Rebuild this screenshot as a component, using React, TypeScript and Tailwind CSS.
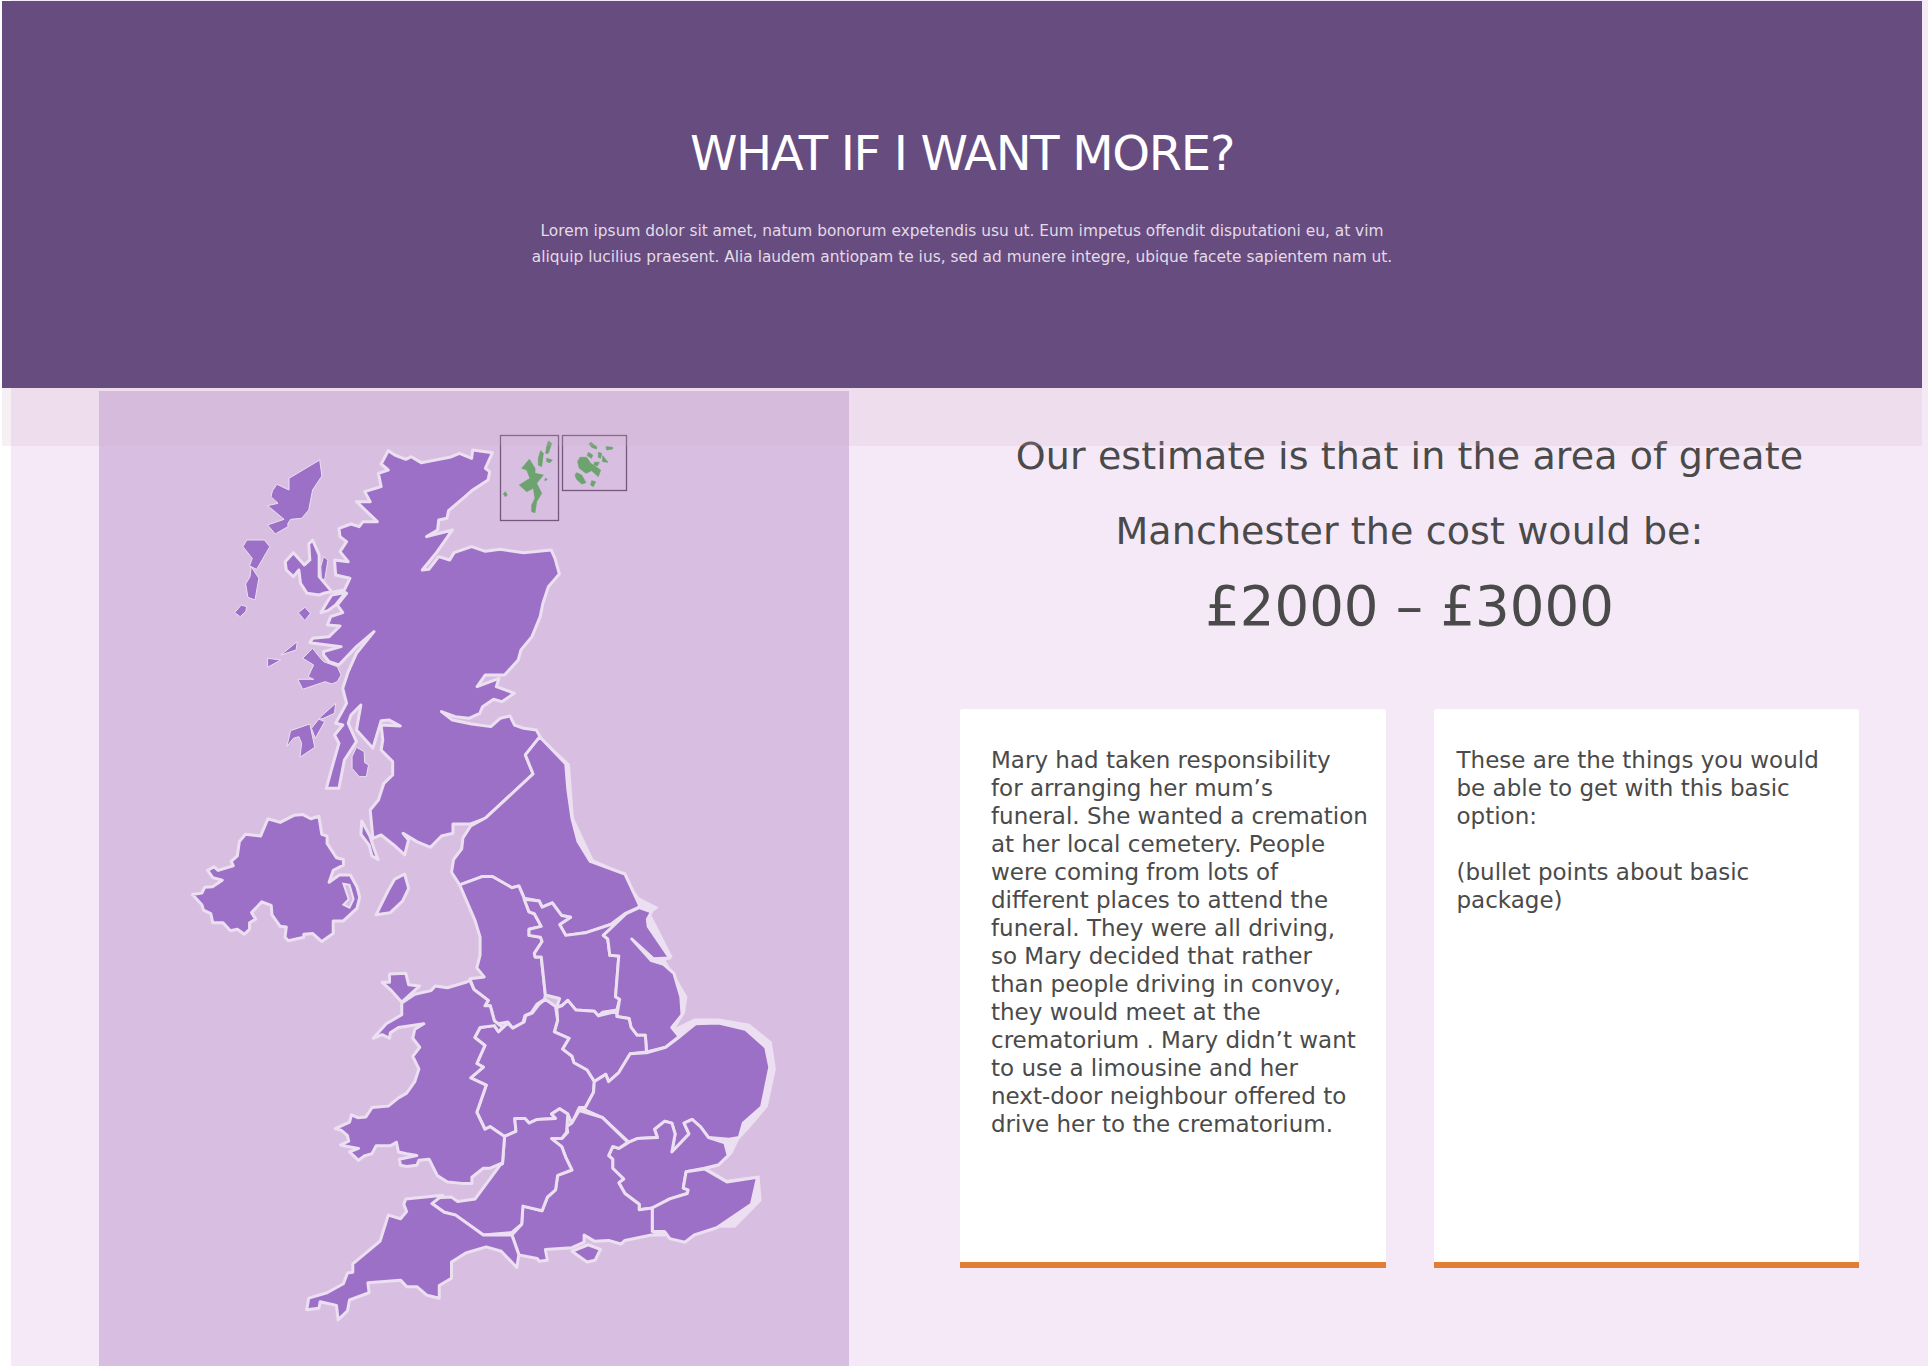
const Z1 = "translate(0 360) scale(0.5484 0.3333)";
const Z2 = "translate(170 800) scale(0.408 0.361)";
const Z3 = "translate(480 420) scale(0.3333 0.3333)";

// traced in the coordinates of each crop, see the three transforms above
const northLand = [
  "708,272 720,285 740,298 750,290 768,308 820,292 838,280 860,295 862,270 898,278 885,325 893,335 890,360 862,390 848,410 818,452 815,475 800,480 798,510 778,530 825,510 795,580 770,630 782,628 800,590 820,600 828,578 860,560 885,574 912,568 955,578 1005,570 1012,595 1020,642 1000,680 990,730 985,770 970,830 950,870 945,900 920,945 885,945 870,980 910,955 905,980 938,1000 915,1025 900,1018 880,1040 875,1060 855,1075 830,1070 805,1055 825,1080 860,1092 895,1100 912,1075 930,1068 938,1095 955,1105 978,1110 985,1130 958,1185 972,1242 885,1375 858,1392 826,1392 826,1420 805,1428 785,1462 760,1445 735,1420 745,1440 738,1485 718,1455 695,1425 680,1435 675,1350 690,1320 700,1270 716,1245 716,1205 695,1170 698,1140 695,1095 730,1098 710,1080 695,1082 680,1165 650,1110 658,1035 640,1065 635,1090 650,1145 628,1200 618,1285 595,1285 605,1225 618,1150 610,1125 625,1095 612,1090 632,1030 625,985 635,935 650,880 682,815 650,860 618,915 600,905 590,885 590,875 622,860 565,848 570,835 600,830 620,798 597,795 603,770 625,758 615,735 632,700 610,695 628,690 638,655 612,645 610,600 635,605 620,575 632,545 620,530 618,505 640,492 655,500 662,485 688,485 650,425 675,425 665,395 695,380 690,340 708,330 695,312",
  "535,578 555,615 565,600 563,552 570,540 582,585 582,650 605,695 590,700 582,705 560,700 548,670 545,630 535,650 522,630 520,605",
  "605,705 630,698 612,735 598,752 585,758 597,725",
];

const northIslands = [
  "583,300 587,348 570,390 563,450 550,475 530,478 525,490 525,500 502,522 488,495 518,478 488,437 507,430 494,410 497,392 505,373 527,390 527,355",
  "450,540 482,540 492,560 468,628 455,618 460,595 443,560",
  "458,620 472,655 465,720 452,712 448,672 456,650",
  "440,735 450,740 448,755 438,770 428,758",
  "556,742 566,760 556,782 544,758",
  "542,845 540,870 512,885",
  "488,895 512,900 488,922",
  "570,865 582,890 590,905 615,920 622,945 615,965 605,972 593,965 552,988 543,958 572,958 562,950 572,915 552,895",
  "612,1030 610,1060 590,1075 582,1078 592,1085 575,1135 568,1105 585,1070",
  "565,1092 574,1162 547,1192 550,1150 545,1130 535,1135 523,1160 530,1112",
  "650,1162 664,1175 665,1208 672,1215 668,1250 655,1250 642,1225 642,1190",
  "590,590 598,600 592,660 586,655 585,620",
];

const coastShadow =
  "906,-178 980,-100 990,50 1015,110 1038,165 1100,195 1150,270 1198,298 1178,315 1232,435 1215,445 1250,510 1268,545 1262,590 1240,630 1285,605 1345,605 1420,620 1475,670 1485,745 1465,850 1420,910 1395,940 1378,980 1345,1015 1320,1022 1365,1052 1445,1040 1450,1110 1385,1185 1340,1185 1000,1000";

const southRegions = [
  "906,-175 871,-125 890,-72 773,50 737,72 718,105 715,135 695,165 690,200 710,235 765,212 790,212 838,243 855,238 868,272 905,280 912,297 937,285 960,320 982,325 955,345 970,375 1018,368 1080,345 1115,315 1150,297 1150,290 1115,205 1030,170 1000,115 985,50 975,-30 970,-100",
  "710,235 765,212 790,212 838,243 855,238 868,272 880,310 893,315 910,350 880,358 880,375 908,380 912,392 893,425 895,435 910,435 920,540 918,552 900,565 885,590 870,597 865,617 840,632 828,615 805,620 795,612 785,570 772,570 780,555 745,525 735,495 770,490 752,465 760,430 760,380 748,335",
  "868,275 905,280 912,297 937,285 960,320 982,325 955,345 970,375 1018,368 1080,345 1100,338 1062,375 1073,385 1078,430 1100,432 1092,545 1102,552 1095,582 1060,588 1050,598 1040,585 995,582 975,555 960,570 948,572 955,550 920,540 910,435 895,435 893,425 912,392 908,380 880,375 880,358 910,350 893,315 880,310",
  "1150,298 1118,315 1062,375 1073,385 1078,430 1100,432 1092,545 1102,552 1095,600 1125,605 1130,630 1145,652 1165,652 1168,698 1215,685 1248,655 1230,630 1255,595 1252,545 1235,480 1210,455 1180,445 1132,385 1185,440 1225,438 1172,350 1170,330 1180,310",
  "1095,585 1095,600 1125,605 1130,630 1145,652 1165,652 1168,698 1128,703 1100,755 1075,780 1068,760 1040,780 1022,748 990,728 985,710 962,690 978,660 942,642 950,610 948,575 960,570 975,555 995,582 1040,585 1050,598",
  "920,552 945,572 950,610 942,642 978,660 962,690 985,710 990,728 1022,748 1040,780 1038,810 1018,852 1003,852 985,895 975,870 955,855 935,870 945,882 900,885 880,895 870,882 845,882 848,918 820,932 785,905 772,912 752,865 775,790 737,770 768,740 752,730 772,680 747,658 760,630 795,625 805,642 815,632 828,618 840,632 868,615 872,597 888,590 905,565",
  "1168,700 1215,685 1250,655 1288,620 1345,618 1410,635 1460,685 1470,740 1450,850 1405,895 1395,935 1370,940 1320,935 1300,905 1285,905 1280,885 1260,895 1272,925 1230,975 1238,925 1230,895 1212,890 1188,912 1195,935 1145,938 1125,948 1060,880 1010,855 1018,852 1038,810 1040,780 1068,760 1075,780 1100,755 1128,703",
  "1125,948 1145,938 1195,935 1188,912 1212,890 1230,895 1238,925 1230,975 1272,925 1260,895 1280,885 1300,905 1320,935 1360,950 1368,985 1345,1010 1310,1020 1265,1030 1258,1075 1270,1080 1268,1090 1225,1105 1185,1130 1150,1135 1150,1120 1115,1090 1100,1060 1112,1050 1085,1020 1085,995 1075,985 1085,960 1100,965",
  "1310,1022 1365,1058 1440,1045 1425,1120 1340,1185 1285,1205 1262,1225 1225,1215 1212,1195 1182,1195 1182,1130 1225,1105 1268,1090 1270,1080 1258,1075 1265,1030",
  "1003,860 1060,880 1122,948 1100,965 1085,960 1075,985 1085,995 1085,1020 1112,1050 1100,1060 1115,1090 1150,1120 1150,1135 1182,1130 1182,1195 1212,1205 1180,1205 1115,1220 1105,1230 1075,1220 1040,1222 1015,1205 1015,1225 985,1240 920,1245 925,1275 905,1278 900,1270 855,1260 838,1205 862,1175 865,1125 912,1138 925,1100 945,1080 950,1040 985,1025 970,990 960,960 935,938 960,938 975,920 972,905 985,895",
  "820,932 848,918 845,882 870,882 880,895 900,885 945,882 935,870 955,855 975,870 972,920 960,938 935,938 960,960 970,990 985,1025 950,1040 945,1080 925,1100 912,1138 865,1125 862,1175 838,1198 768,1205 700,1150 672,1142 642,1118 655,1102 690,1100 705,1112 748,1105 810,1010 815,1008",
  "735,500 745,525 780,555 772,570 785,570 795,612 815,630 805,642 795,625 760,630 747,658 772,680 752,730 768,740 737,770 775,790 752,865 772,912 785,905 820,932 815,1005 785,1020 768,1020 740,1045 740,1062 715,1062 680,1058 655,1040 635,995 610,998 605,1012 580,1015 565,1012 562,995 605,985 580,980 560,975 555,948 540,958 505,958 495,980 478,985 462,998 440,975 462,965 425,958 418,955 438,945 435,930 420,915 405,910 440,892 445,872 460,880 480,878 495,852 535,848 560,825 580,812 600,780 610,745 595,710 612,685 595,660 600,635 622,620 560,630 540,645 538,660 520,650 498,660 530,620 568,595 568,562 600,538 640,528 650,515 680,520 725,505",
  "520,505 538,505 538,482 578,480 585,512 612,515 568,560 540,525",
  "578,1105 668,1095 642,1118 672,1142 700,1150 768,1205 838,1205 855,1260 850,1295 812,1250 775,1238 725,1255 690,1280 690,1325 660,1345 660,1380 630,1372 605,1348 580,1348 565,1330 485,1337 488,1365 440,1385 435,1415 412,1440 408,1400 368,1390 365,1408 335,1412 340,1380 385,1365 425,1340 435,1310 448,1308 448,1285 515,1222 535,1150 565,1160 580,1140 573,1120",
  "985,1250 1025,1232 1055,1245 1042,1275 1022,1280",
  "575,205 585,245 570,280 540,312 505,318 535,250 550,220",
  "470,58 490,100 500,135 510,165 495,155 488,125 468,95",
  "240,52 270,62 305,42 325,40 345,52 365,45 372,95 385,100 385,120 408,160 425,165 425,180 400,195 390,228 415,208 442,208 458,240 465,270 458,300 425,335 400,335 400,370 372,392 350,370 328,372 328,380 290,390 282,380 285,352 270,350 250,318 248,292 225,282 200,312 210,330 195,340 195,358 182,372 165,358 148,362 130,340 105,340 100,315 82,305 78,290 55,262 78,258 85,242 105,240 128,222 105,215 92,195 108,185 118,195 155,182 150,170 165,155 170,115 185,95 222,100",
];

const northernIsles = [
  "148,118 165,145 165,160 190,165 170,190 185,220 170,245 165,278 155,275 155,255 165,235 160,205 140,215 118,195 150,175 140,150 125,145",
  "182,92 190,100 185,140 175,135 175,115",
  "205,63 215,70 205,100 197,100 200,80",
  "200,115 217,120 210,128 200,125",
  "195,175 202,178 195,183",
  "76,215 82,225 76,230 70,222",
  "300,112 320,112 332,130 362,150 355,170 335,152 318,160 298,145 293,125",
  "290,158 305,165 318,188 305,192 290,178 285,165",
  "335,182 347,185 340,200 332,195",
  "333,67 350,80 350,87 335,82 327,72",
  "368,107 384,127 368,125",
  "343,127 358,127 352,138 342,135",
  "325,97 338,105 335,115 322,107",
  "355,97 365,100 362,115 355,112",
  "378,80 398,82 398,87 380,90",
];

function UkMap() {
  const land = {
    fill: "#9c70c6",
    stroke: "#ecdff1",
    strokeWidth: 3,
    strokeLinejoin: "round" as const,
    vectorEffect: "non-scaling-stroke" as const,
  };
  return (
    <svg width="750" height="975" viewBox="99 391 750 975" className="block">
      <g transform={Z2}>
        <polygon points={coastShadow} fill="#ecdff1" />
      </g>
      <g transform={Z1}>
        {northLand.map((p) => (
          <polygon key={p} points={p} {...land} />
        ))}
        {northIslands.map((p) => (
          <polygon key={p} points={p} {...land} strokeWidth={1} />
        ))}
      </g>
      <g transform={Z2}>
        {southRegions.map((p) => (
          <polygon key={p} points={p} {...land} />
        ))}
        <polygon points="425,232 440,235 450,275 440,298 425,290 438,275" fill="#d8bfe2" stroke="#ecdff1" strokeWidth={2} vectorEffect="non-scaling-stroke" />
      </g>
      <rect x="500.5" y="435.5" width="58" height="85" fill="none" stroke="#75587c" strokeWidth="1.3" />
      <rect x="562.5" y="435.5" width="64" height="55" fill="none" stroke="#75587c" strokeWidth="1.3" />
      <g transform={Z3} fill="#6da36f" stroke="#6da36f" strokeWidth="2">
        {northernIsles.map((p) => (
          <polygon key={p} points={p} />
        ))}
      </g>
    </svg>
  );
}

function Card({ lines, className }: { lines: string[]; className: string }) {
  return (
    <div className={`w-[426px] h-[559px] bg-white rounded-t-[3px] border-b-[6px] border-[#e27d36] pt-[37px] text-[23px] leading-[28px] text-[#4a4a4a] ${className}`}>
      {lines.map((line, i) => (
        <div key={i} className="min-h-[28px] whitespace-nowrap">
          {line}
        </div>
      ))}
    </div>
  );
}

export default function App() {
  return (
    <div className="relative h-[1366px] overflow-hidden bg-white pl-[11px] font-['DejaVu_Sans',sans-serif]">
      <div className="h-full bg-[#f5e9f7] pt-px">
        <header className="-ml-[9px] mr-[6px] h-[387px] bg-[#674c80] pt-[122px] text-center">
          <h1 className="text-[48px] leading-[60px] text-white tracking-[-1.3px]">WHAT IF I WANT MORE?</h1>
          <p className="mt-[35px] text-[15.4px] leading-[26px] text-[#e3dbe6]">
            Lorem ipsum dolor sit amet, natum bonorum expetendis usu ut. Eum impetus offendit disputationi eu, at vim
            <br />
            aliquip lucilius praesent. Alia laudem antiopam te ius, sed ad munere integre, ubique facete sapientem nam ut.
          </p>
        </header>
        <main className="flex mt-[3px]">
          <div className="ml-[88px] w-[750px] h-[975px] bg-[#d8bfe2]">
            <UkMap />
          </div>
          <div className="ml-[111px] w-[899px]">
            <div className="pt-[28px] text-center text-[#4a4a4a]">
              <h2 className="text-[38px] leading-[75px] tracking-[0.1px]">
                Our estimate is that in the area of greate
                <br />
                Manchester the cost would be:
              </h2>
              <p className="text-[54.5px] leading-[75px]">£2000 – £3000</p>
            </div>
            <div className="mt-[65px] flex gap-[48px]">
              <Card
                className="pl-[31px]"
                lines={[
                  "Mary had taken responsibility",
                  "for arranging her mum’s",
                  "funeral. She wanted a cremation",
                  "at her local cemetery. People",
                  "were coming from lots of",
                  "different places to attend the",
                  "funeral. They were all driving,",
                  "so Mary decided that rather",
                  "than people driving in convoy,",
                  "they would meet at the",
                  "crematorium . Mary didn’t want",
                  "to use a limousine and her",
                  "next-door neighbour offered to",
                  "drive her to the crematorium.",
                ]}
              />
              <Card
                className="pl-[23px]"
                lines={[
                  "These are the things you would",
                  "be able to get with this basic",
                  "option:",
                  "",
                  "(bullet points about basic",
                  "package)",
                ]}
              />
            </div>
          </div>
        </main>
      </div>
      <div className="absolute left-[2px] top-[388px] h-[58px] w-[1920px] bg-[#d2adca]/20" />
    </div>
  );
}
